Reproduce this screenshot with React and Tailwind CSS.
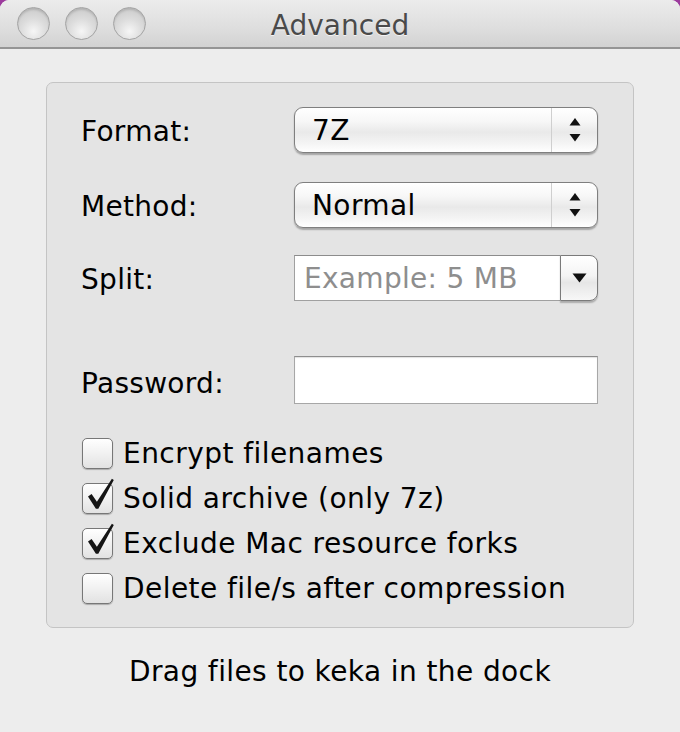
import React from "react";

const FONT = "font-['DejaVu_Sans','Verdana',sans-serif]";

// Window control circles (inactive window, so all grey)
const Light = () => (
  <div className="w-[33px] h-[33px] rounded-full border border-[#a3a3a3] bg-[radial-gradient(circle_at_50%_75%,#f6f6f6_0%,#dcdcdc_45%,#c4c4c4_100%)] shadow-[inset_0_2px_2px_rgba(0,0,0,0.12)]" />
);

const UpDown = () => (
  <svg width="12" height="26" viewBox="0 0 12 26">
    <path d="M6 1 L11.5 8.5 L0.5 8.5 Z" fill="#111" />
    <path d="M0.5 17 L11.5 17 L6 24.5 Z" fill="#111" />
  </svg>
);

const Popup = ({ value }) => (
  <div className="flex w-[304px] h-[46px] rounded-[9px] border border-[#7f7f7f] bg-[linear-gradient(#ffffff_0%,#f7f7f7_30%,#e9e9e9_55%,#f4f4f4_80%,#ffffff_100%)] shadow-[0_1.5px_1.5px_rgba(0,0,0,0.28)]">
    <div className="flex-1 flex items-center pl-[17px] pt-[2px] text-[28px] tracking-[0.4px] text-black border-r border-[#cfcfcf]">
      {value}
    </div>
    <div className="w-[45px] flex items-center justify-center">
      <UpDown />
    </div>
  </div>
);

const Combo = ({ placeholder }) => (
  <div className="flex w-[304px] h-[46px]">
    <div className="flex-1 flex items-center pl-[9px] pt-[2px] bg-white border border-r-0 border-[#a0a0a0] border-t-[#8c8c8c] text-[28px] tracking-[0.3px] text-[#8e8e8e]">
      {placeholder}
    </div>
    <div className="w-[38px] flex items-center justify-center rounded-r-[8px] border border-[#7a7a7a] bg-[linear-gradient(#ffffff_0%,#f4f4f4_45%,#e6e6e6_60%,#f7f7f7_100%)] shadow-[0_1.5px_1.5px_rgba(0,0,0,0.25)]">
      <svg width="15" height="10" viewBox="0 0 15 10">
        <path d="M0.5 0.5 L14.5 0.5 L7.5 9.5 Z" fill="#111" />
      </svg>
    </div>
  </div>
);

const Check = ({ label, checked }) => (
  <div className="flex items-center h-[45px]">
    <div className="relative w-[31px] h-[31px] ml-[1px] rounded-[5px] border-[1.5px] border-[#777] bg-[linear-gradient(#ffffff_0%,#f1f1f1_50%,#e2e2e2_100%)] shadow-[0_1px_1px_rgba(0,0,0,0.25)]">
      {checked && (
        <svg
          className="absolute left-0 -top-[7px] overflow-visible"
          width="34"
          height="38"
          viewBox="0 0 34 38"
        >
          <path
            d="M5 19.5 L8.6 17 L13.9 24.8 L28.9 1.8 L30.8 3 L15.3 31.8 L12.9 31.8 Z"
            fill="#151515"
          />
        </svg>
      )}
    </div>
    <span className="ml-[10px] pt-[1px] text-[28px] tracking-[0.45px] text-black">{label}</span>
  </div>
);

const Label = ({ children, extra = "" }) => (
  <div className={`w-[213px] pt-[3px] text-[28px] tracking-[0.3px] text-black ${extra}`}>
    {children}
  </div>
);

export default function App() {
  return (
    <div className={`w-[680px] h-[732px] bg-[#9c3b9d] ${FONT}`}>
      <div className="w-full h-full flex flex-col rounded-t-[9px] overflow-hidden bg-[#ededed]">
        {/* title bar */}
        <div className="h-[49px] shrink-0 grid grid-cols-[1fr_auto_1fr] items-center bg-[linear-gradient(#ececec_0%,#dedede_60%,#d2d2d2_100%)] border-b-2 border-[#959595]">
          <div className="flex items-center gap-[15px] pl-[17px]">
            <Light />
            <Light />
            <Light />
          </div>
          <div className="pt-[4px] text-[28px] text-[#4a4a4a] [text-shadow:0_1px_0_rgba(255,255,255,0.7)]">
            Advanced
          </div>
          <div />
        </div>

        {/* group box */}
        <div className="mt-[33px] ml-[46px] w-[588px] h-[546px] rounded-[7px] border-[1.5px] border-[#c4c4c4] bg-[#e4e4e4] pt-[24px] pl-[34px]">
          <div className="flex items-center">
            <Label>Format:</Label>
            <Popup value="7Z" />
          </div>
          <div className="flex items-center mt-[29px]">
            <Label>Method:</Label>
            <Popup value="Normal" />
          </div>
          <div className="flex items-center mt-[27px]">
            <Label>Split:</Label>
            <Combo placeholder="Example: 5 MB" />
          </div>
          <div className="flex items-center mt-[54px]">
            <Label extra="pt-[8px]">Password:</Label>
            <div className="w-[304px] h-[48px] bg-white border border-[#a7a7a7] border-t-[#8e8e8e] shadow-[inset_0_1px_1px_rgba(0,0,0,0.12)]" />
          </div>
          <div className="mt-[26px] flex flex-col">
            <Check label="Encrypt filenames" />
            <Check label="Solid archive (only 7z)" checked />
            <Check label="Exclude Mac resource forks" checked />
            <Check label="Delete file/s after compression" />
          </div>
        </div>

        {/* footer */}
        <div className="mt-[23px] text-center text-[28px] tracking-[0.4px] text-black">
          Drag files to keka in the dock
        </div>
      </div>
    </div>
  );
}
